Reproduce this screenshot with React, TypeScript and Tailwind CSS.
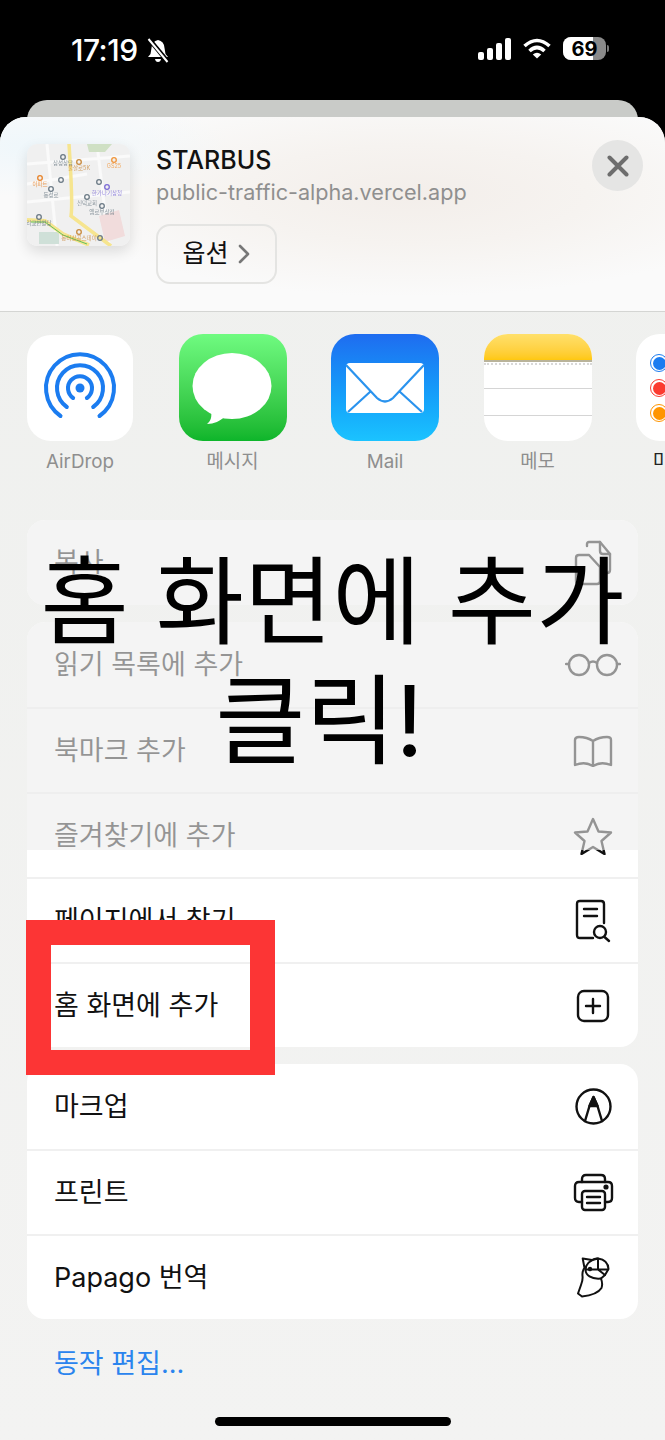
import type { ReactNode } from "react";

const font = { fontFamily: '"Inter", "Noto Sans CJK KR", sans-serif' };

const mapPins = [
  { x: 36, y: 13, c: "#6b7a85", label: "삼성상담" },
  { x: 52, y: 18, c: "#c98a3c", label: "울살로5K" },
  { x: 87, y: 16, c: "#f0953a", label: "GS25" },
  { x: 13, y: 34, c: "#e8832a", label: "아파트" },
  { x: 34, y: 36, c: "#6b7a85", label: "" },
  { x: 72, y: 38, c: "#6b7a85", label: "" },
  { x: 80, y: 43, c: "#7c6bd6", label: "한가나기상청" },
  { x: 24, y: 45, c: "#6b7a85", label: "동성로" },
  { x: 60, y: 53, c: "#6b7a85", label: "신덕교회" },
  { x: 75, y: 62, c: "#6b7a85", label: "엠로부상점" },
  { x: 12, y: 73, c: "#6b7a85", label: "리교반활당" },
  { x: 52, y: 88, c: "#c98a3c", label: "동리상공스데이" },
  { x: 73, y: 94, c: "#6b7a85", label: "" },
];

function MapThumb() {
  return (
    <svg width="103" height="102" viewBox="0 0 103 102" className="rounded-[10px] shadow-[0_6px_14px_rgba(0,0,0,0.12)] shrink-0">
      <defs>
        <filter id="soft">
          <feGaussianBlur stdDeviation="0.4" />
        </filter>
      </defs>
      <rect width="103" height="102" fill="#f0f0f0" />
      <g filter="url(#soft)">
        <path d="M0 20L103 12M0 58L103 48M20 0L30 102M70 0L82 102M0 40L60 30" stroke="#fafafa" strokeWidth="3" fill="none" />
        <path d="M60 0H85L78 8L62 8Z" fill="#cfe0c4" />
        <rect x="12" y="88" width="20" height="12" fill="#cfe0d8" />
        <path d="M72 72L92 66L98 92L78 98Z" fill="#f1dcdc" />
        <path d="M42 0C44 30 46 60 44 72L84 102" stroke="#f6e58f" strokeWidth="3.5" fill="none" />
        <path d="M0 76L18 77L36 90L62 101" stroke="#f6e58f" strokeWidth="4" fill="none" />
        <path d="M4 78L18 78L36 91L60 100" stroke="#5fbf5f" strokeWidth="1" fill="none" />
        {mapPins.map((p) => (
          <g key={`${p.x}-${p.y}`}>
            <circle cx={p.x} cy={p.y} r="2.3" fill="none" stroke={p.c} strokeWidth="1.3" />
            {p.label && (
              <text x={p.x} y={p.y + 8} fontSize="5.5" textAnchor="middle" fill={p.c} fillOpacity="0.8">
                {p.label}
              </text>
            )}
          </g>
        ))}
      </g>
    </svg>
  );
}

function AirDropIcon() {
  return (
    <div className="w-[106px] h-[106px] mt-[1px] rounded-[24px] bg-white">
      <svg width="106" height="106" viewBox="0 0 106 106" fill="none" stroke="#1b7cf0" strokeWidth="4" strokeLinecap="round">
        <path d="M33.5 81A34 34 0 1 1 72.5 81" />
        <path d="M39.8 72A23 23 0 1 1 66.2 72" />
        <path d="M46.1 63A12 12 0 1 1 59.9 63" />
        <circle cx="53" cy="53" r="4.5" fill="#1b7cf0" stroke="none" />
      </svg>
    </div>
  );
}

function MessageIcon() {
  return (
    <div className="w-[108px] h-[107px] rounded-[24px] bg-gradient-to-b from-[#6ffb80] to-[#0cb52a]">
      <svg width="108" height="107" viewBox="0 0 108 107" fill="white">
        <ellipse cx="53" cy="52" rx="39.5" ry="33" />
        <path d="M32 76C33 83 32 87 28 90C35 90 41 87 47 82Z" />
      </svg>
    </div>
  );
}

function MailIcon() {
  return (
    <div className="w-[108px] h-[107px] rounded-[24px] bg-gradient-to-b from-[#1f6cf0] to-[#1bc3ff]">
      <svg width="108" height="107" viewBox="0 0 108 107" fill="none">
        <rect x="15" y="29" width="78" height="50" rx="4" fill="white" />
        <path d="M15 31L46 64Q54 71 62 64L93 31M17 78L40 57M91 78L68 57" stroke="#2a93ee" strokeWidth="2.2" />
      </svg>
    </div>
  );
}

function NotesIcon() {
  return (
    <div className="w-[108px] h-[107px] rounded-[24px] bg-white overflow-hidden flex flex-col">
      <div className="h-[28px] bg-gradient-to-b from-[#ffe06a] to-[#ffc80c] border-b-2 border-[#b9b39a]" />
      <div className="h-[27px] border-b border-[#d5d5d5]">
        <div className="border-t-2 border-dotted border-[#d8d8d8] mt-[1px]" />
      </div>
      <div className="h-[27px] border-b border-[#d5d5d5]" />
    </div>
  );
}

function RemindersIcon() {
  const dots = ["border-[#1b7cf0] after:bg-[#1b7cf0]", "border-[#fb3b30] after:bg-[#fb3b30]", "border-[#ff9500] after:bg-[#ff9500]"];
  return (
    <div className="w-[108px] h-[107px] rounded-[24px] bg-white flex flex-col gap-[7px] pt-[20px] pl-[14px]">
      {dots.map((d) => (
        <div key={d} className={`w-[18px] h-[18px] rounded-full border flex items-center justify-center after:block after:w-[13px] after:h-[13px] after:rounded-full ${d}`} />
      ))}
    </div>
  );
}

const apps: { label: string; icon: ReactNode; dark?: boolean }[] = [
  { label: "AirDrop", icon: <AirDropIcon /> },
  { label: "메시지", icon: <MessageIcon /> },
  { label: "Mail", icon: <MailIcon /> },
  { label: "메모", icon: <NotesIcon /> },
  { label: "미리 알림", icon: <RemindersIcon />, dark: true },
];

function StrokeIcon({ w, h, children }: { w: number; h: number; children: ReactNode }) {
  return (
    <svg width={w} height={h} viewBox={`0 0 ${w} ${h}`} fill="none" stroke="#111" strokeWidth="2.4" strokeLinecap="round" strokeLinejoin="round">
      {children}
    </svg>
  );
}

const CopyIcon = (
  <StrokeIcon w={38} h={46}>
    <path d="M13 6V4Q13 2 15 2H26L36 14V30Q36 33 33 33H28" />
    <path d="M26 2V11Q26 14 29 14H36" />
    <path d="M2 18Q2 15 5 15H15L26 27V41Q26 44 23 44H5Q2 44 2 41Z" />
  </StrokeIcon>
);

const GlassesIcon = (
  <StrokeIcon w={56} h={24}>
    <circle cx="14" cy="12" r="10" />
    <circle cx="42" cy="12" r="10" />
    <path d="M24 10Q28 7 32 10M1 11H4M52 11H55" />
  </StrokeIcon>
);

const BookIcon = (
  <StrokeIcon w={40} h={32}>
    <path d="M20 6Q14 2 6 2Q2 2 2 5V30Q12 26 20 31Q28 26 38 30V5Q38 2 34 2Q26 2 20 6ZM20 6V31" />
  </StrokeIcon>
);

const StarIcon = (
  <StrokeIcon w={40} h={38}>
    <path d="M20 2L25.5 14.5L38 15.5L28.5 24L31.5 37L20 30L8.5 37L11.5 24L2 15.5L14.5 14.5Z" />
  </StrokeIcon>
);

const FindIcon = (
  <StrokeIcon w={36} h={44}>
    <path d="M18 39H5Q2 39 2 36V5Q2 2 5 2H26Q29 2 29 5V24" />
    <path d="M9 10H22M9 17H22" />
    <circle cx="25" cy="33" r="6" />
    <path d="M29.5 38L34 42" />
  </StrokeIcon>
);

const PlusIcon = (
  <StrokeIcon w={34} h={34}>
    <rect x="2" y="2" width="30" height="30" rx="6" />
    <path d="M17 10V24M10 17H24" />
  </StrokeIcon>
);

const MarkupIcon = (
  <StrokeIcon w={37} h={37}>
    <circle cx="18.5" cy="18.5" r="17" />
    <path d="M10 33L14.5 18L18.5 9L22.5 18L27 33" />
    <path d="M18.5 9L14.5 18H22.5Z" fill="#111" />
  </StrokeIcon>
);

const PrinterIcon = (
  <StrokeIcon w={41} h={39}>
    <path d="M9 9V6Q9 2 13 2H28Q32 2 32 6V9" />
    <path d="M9 29H6Q2 29 2 25V13Q2 9 6 9H35Q39 9 39 13V25Q39 29 35 29H32" />
    <rect x="9" y="18" width="23" height="19" rx="3" />
    <path d="M14 24H27M14 30H27" />
    <circle cx="33" cy="14" r="1.4" fill="#111" />
  </StrokeIcon>
);

const PapagoIcon = (
  <StrokeIcon w={33} h={41}>
    <path d="M5.7 1.5L15 3Q18 1 21 1.5Q31 3 31.5 12L28 18L24 21.5Q26 27 24.5 31Q20 38 5 39.5L1 36.5L4 28Q6 23 5.5 19Q5 14 7.5 11Z" strokeWidth="2" />
    <path d="M21 1.5C12 3 8.5 8 8.5 12.5C8.5 18 14 22.5 24 21.5M8.5 12.5H31M21 1.5V12.5L28 18" strokeWidth="2" />
    <circle cx="13" cy="12" r="1" fill="#111" />
  </StrokeIcon>
);

function Row({ label, icon, divider = true }: { label: string; icon: ReactNode; divider?: boolean }) {
  return (
    <div className={`h-[85px] flex items-center justify-between pl-[27px] pr-[15px] text-[27px] text-[#111] ${divider ? "border-t-2 border-[#f0f0f0]" : ""}`}>
      <span className="pt-[2px]">{label}</span>
      <span className="w-[60px] flex justify-center">{icon}</span>
    </div>
  );
}

export default function App() {
  return (
    <div style={font} className="relative w-[665px] h-[1440px] bg-black overflow-hidden">
      {/* status bar */}
      <div className="h-[100px] relative flex items-start justify-between pl-[71px] pr-[56px] pt-[33px] text-white">
        <div className="flex items-center gap-[8px]">
          <span className="text-[30px] leading-[34px] font-medium tracking-[-0.5px]">17:19</span>
          <svg width="24" height="25" viewBox="0 0 24 25" fill="white">
            <path d="M12 2Q18 3 18.5 10L19.5 16L22 19H2L4.5 16L5.5 10Q6 3 12 2Z" />
            <path d="M9 21H15Q14.5 24 12 24Q9.5 24 9 21Z" />
            <path d="M3 1L22 24" stroke="black" strokeWidth="4.5" />
            <path d="M2.5 1L21.5 24" stroke="white" strokeWidth="2" />
          </svg>
        </div>
        <div className="flex items-center gap-[12px] pt-[4px]">
          <div className="flex items-end gap-[3px] h-[22px]">
            <div className="w-[6px] h-[8px] rounded-[2px] bg-white" />
            <div className="w-[6px] h-[12px] rounded-[2px] bg-white" />
            <div className="w-[6px] h-[17px] rounded-[2px] bg-white" />
            <div className="w-[6px] h-[22px] rounded-[2px] bg-white" />
          </div>
          <svg width="28" height="21" viewBox="0 0 28 21" fill="none" stroke="white" strokeWidth="3.6">
            <path d="M1.5 8Q14 -3 26.5 8" />
            <path d="M6.5 13Q14 6 21.5 13" />
            <path d="M14 20.5L9.8 16.5Q14 13 18.2 16.5Z" fill="white" stroke="none" />
          </svg>
          <div className="flex items-center gap-[1px]">
            <div className="relative w-[43px] h-[23px] rounded-[8px] overflow-hidden bg-[#8a8a8a] flex items-center justify-center">
              <div className="absolute inset-y-0 left-0 w-[30px] bg-white" />
              <span className="relative text-[20px] leading-none font-bold text-black">69</span>
            </div>
            <div className="w-[2px] h-[7px] rounded-r-full bg-[#7a7a7a]" />
          </div>
        </div>
      </div>

      {/* page card behind the sheet */}
      <div className="h-[30px] mx-[27px] rounded-t-[20px] bg-[#c9cbc8]" />

      {/* share sheet */}
      <div className="-mt-[13px] h-[1323px] rounded-t-[26px] overflow-hidden bg-gradient-to-b from-[#eff0ee] to-[#f3f3f2]">
        <div className="relative h-[195px] flex border-b border-[#d4d5d3] pl-[27px] pt-[27px] bg-[radial-gradient(ellipse_at_5%_15%,#eff7fb_0%,transparent_22%),radial-gradient(ellipse_at_62%_40%,#f3eeea_0%,#f6f3f0_30%,transparent_62%),linear-gradient(#fafafa,#fafafa)]">
          <MapThumb />
          <div className="ml-[26px] flex flex-col items-start">
            <div className="text-[25px] leading-[32px] font-medium text-[#111]">STARBUS</div>
            <div className="text-[21.6px] leading-[32px] text-[#8f8f8f]">public-traffic-alpha.vercel.app</div>
            <div className="mt-[16px] w-[121px] h-[60px] rounded-[14px] border-2 border-[#e4e4e2] flex items-center justify-center gap-[9px] pr-[1px]">
              <span className="text-[25px] text-[#111]">옵션</span>
              <svg width="12" height="20" viewBox="0 0 12 20" fill="none" stroke="#777" strokeWidth="2.6" strokeLinecap="round" strokeLinejoin="round">
                <path d="M2 2L10 10L2 18" />
              </svg>
            </div>
          </div>
          <div className="absolute top-[23px] right-[22px] w-[51px] h-[51px] rounded-full bg-[#e5e5e4] flex items-center justify-center">
            <svg width="22" height="22" viewBox="0 0 22 22" fill="none" stroke="#6d6d6d" strokeWidth="4" strokeLinecap="round">
              <path d="M2.5 2.5L19.5 19.5M19.5 2.5L2.5 19.5" />
            </svg>
          </div>
        </div>

        {/* app row */}
        <div className="flex gap-[44.5px] pl-[26px] pt-[22px] h-[208px] overflow-hidden">
          {apps.map((a) => (
            <div key={a.label} className="w-[108px] shrink-0 flex flex-col items-center">
              {a.icon}
              <span className="mt-[9px] text-[18.8px] leading-[24px] whitespace-nowrap data-[dark=true]:text-[#222] text-[#8e8e8e]" data-dark={a.dark ? "true" : "false"}>{a.label}</span>
            </div>
          ))}
        </div>

        <div className="px-[27px]">
          <div className="relative rounded-[18px] overflow-hidden bg-white">
            <Row label="복사" icon={CopyIcon} divider={false} />
            <div className="absolute inset-0 bg-[#ededed]/60" />
          </div>

          <div className="relative mt-[17px] rounded-[18px] overflow-hidden bg-white">
            <Row label="읽기 목록에 추가" icon={GlassesIcon} divider={false} />
            <Row label="북마크 추가" icon={BookIcon} />
            <Row label="즐겨찾기에 추가" icon={StarIcon} />
            <Row label="페이지에서 찾기" icon={FindIcon} />
            <Row label="홈 화면에 추가" icon={PlusIcon} />
            <div className="absolute inset-x-0 top-0 h-[228px] bg-[#ededed]/60" />
          </div>

          <div className="mt-[17px] rounded-[18px] overflow-hidden bg-white">
            <Row label="마크업" icon={MarkupIcon} divider={false} />
            <Row label="프린트" icon={PrinterIcon} />
            <Row label="Papago 번역" icon={PapagoIcon} />
          </div>

          <div className="mt-[27px] pl-[27px] text-[27px] leading-[36px] text-[#2a84ee]">동작 편집...</div>
          <div className="mt-[35px] mx-auto w-[236px] h-[9px] rounded-full bg-black" />
        </div>
      </div>

      {/* tutorial caption drawn over the screenshot */}
      <div className="absolute top-[541px] inset-x-0 text-center text-[96px] leading-[120px] text-black">
        홈 화면에 추가
        <br />
        <span className="inline-block pr-[26px] text-[98px]">클릭!</span>
      </div>

      {/* red highlight box */}
      <div className="absolute left-[26px] top-[920px] w-[249px] h-[155px] border-[25px] border-[#fc3535]" />
    </div>
  );
}
